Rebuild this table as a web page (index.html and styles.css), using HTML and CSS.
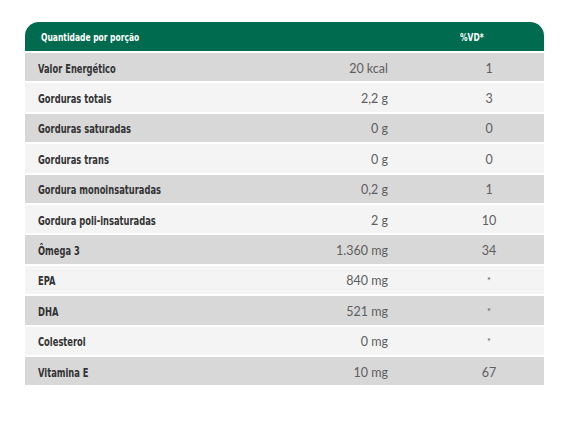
FILE: index.html
```html
<!DOCTYPE html>
<html lang="pt">
<head>
<meta charset="utf-8">
<link rel="stylesheet" href="styles.css">
</head>
<body>
<div class="table">
  <div class="head">
    <div class="hlabel"><span class="narrow">Quantidade por porção</span></div>
    <div class="hvd"><span class="narrow">%VD*</span></div>
  </div>
  <div class="row dark"><div class="label"><span class="narrow">Valor Energético</span></div><div class="val">20 kcal</div><div class="vd">1</div></div>
  <div class="row light"><div class="label"><span class="narrow">Gorduras totais</span></div><div class="val">2,2 g</div><div class="vd">3</div></div>
  <div class="row dark"><div class="label"><span class="narrow">Gorduras saturadas</span></div><div class="val">0 g</div><div class="vd">0</div></div>
  <div class="row light"><div class="label"><span class="narrow">Gorduras trans</span></div><div class="val">0 g</div><div class="vd">0</div></div>
  <div class="row dark"><div class="label"><span class="narrow">Gordura monoinsaturadas</span></div><div class="val">0,2 g</div><div class="vd">1</div></div>
  <div class="row light"><div class="label"><span class="narrow">Gordura poli-insaturadas</span></div><div class="val">2 g</div><div class="vd">10</div></div>
  <div class="row dark"><div class="label"><span class="narrow">Ômega 3</span></div><div class="val">1.360 mg</div><div class="vd">34</div></div>
  <div class="row light"><div class="label"><span class="narrow">EPA</span></div><div class="val">840 mg</div><div class="vd star">*</div></div>
  <div class="row dark"><div class="label"><span class="narrow">DHA</span></div><div class="val">521 mg</div><div class="vd star">*</div></div>
  <div class="row light"><div class="label"><span class="narrow">Colesterol</span></div><div class="val">0 mg</div><div class="vd star">*</div></div>
  <div class="row dark"><div class="label"><span class="narrow">Vitamina E</span></div><div class="val">10 mg</div><div class="vd">67</div></div>
</div>
</body>
</html>
```

FILE: styles.css
```css
html, body {
  margin: 0;
  padding: 0;
  background: #ffffff;
}
body {
  padding: 22px 0 0 25px;
}
.table {
  width: 519px;
  display: flex;
  flex-direction: column;
  gap: 2px;
}
.narrow {
  display: inline-block;
  transform: scaleX(0.8);
  transform-origin: left center;
  white-space: nowrap;
}
.head {
  height: 29px;
  background: #006b4e;
  border-radius: 14px 14px 0 0;
  display: grid;
  grid-template-columns: 1fr 84px;
  align-items: center;
  color: #ffffff;
  font-family: "DejaVu Sans Condensed", "DejaVu Sans", sans-serif;
  font-weight: bold;
  font-size: 10.5px;
}
.hlabel {
  padding-left: 16px;
  padding-top: 1px;
}
.hvd {
  padding-top: 1px;
}
.row {
  height: 28.4px;
  display: grid;
  grid-template-columns: 1fr 120px 81px 40px 35px;
  align-items: center;
}
.dark {
  background: #d8d8d8;
}
.light {
  background: #f4f4f4;
}
.label {
  padding-left: 13px;
  padding-top: 3px;
  font-family: "DejaVu Sans Condensed", "DejaVu Sans", sans-serif;
  font-weight: bold;
  font-size: 11.6px;
  color: #333333;
}
.val {
  grid-column: 2;
  text-align: right;
  font-family: Lato, "Liberation Sans", sans-serif;
  font-weight: 400;
  font-size: 12.5px;
  color: #5e5e5e;
  padding-top: 2px;
}
.vd {
  grid-column: 4;
  text-align: center;
  font-family: Lato, "Liberation Sans", sans-serif;
  font-weight: 400;
  font-size: 12.5px;
  color: #5e5e5e;
  padding-top: 2px;
}
.star {
  font-size: 9px;
  color: #555555;
}
```
